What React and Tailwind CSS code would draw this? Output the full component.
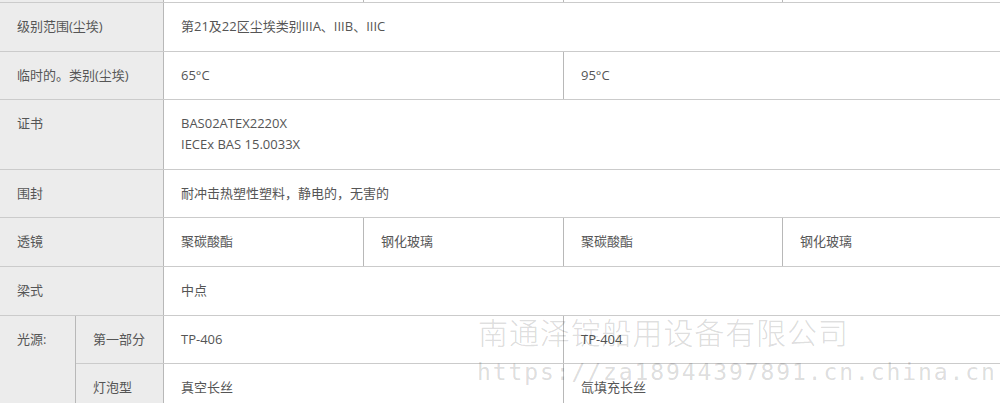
import React from "react";

const font = { fontFamily: '"Open Sans", "Noto Sans CJK SC", sans-serif' };

const Label = ({ children, w = "w-[164px]" }) => (
  <div className={`${w} shrink-0 bg-[#ececec] border-r border-[#b8b8b8] pl-[17px] pt-[13px] leading-[21px]`}>
    {children}
  </div>
);

const Cell = ({ children, w = "flex-1", last }) => (
  <div className={`${w} ${last ? "" : "border-r border-[#b8b8b8]"} pl-[17px] pt-[13px] leading-[21px]`}>
    {children}
  </div>
);

const Row = ({ h, children }) => (
  <div className={`${h} flex border-b border-[#cbcbcb]`}>{children}</div>
);

export default function App() {
  return (
    <div
      className="relative w-[1000px] h-[403px] overflow-hidden bg-white text-[13px] text-[#555]"
      style={font}
    >
      {/* tail of the previous row */}
      <div className="h-[3px] flex border-b border-[#cbcbcb]">
        <div className="w-[164px] bg-[#ececec] border-r border-[#b8b8b8]" />
        <div className="w-[200px] border-r border-[#b8b8b8]" />
        <div className="w-[200px] border-r border-[#b8b8b8]" />
        <div className="w-[219px] border-r border-[#b8b8b8]" />
        <div className="flex-1" />
      </div>

      <Row h="h-[49px]">
        <Label>级别范围(尘埃)</Label>
        <Cell last>第21及22区尘埃类别IIIA、IIIB、IIIC</Cell>
      </Row>

      <Row h="h-[48px]">
        <Label>临时的。类别(尘埃)</Label>
        <Cell w="w-[400px]">65°C</Cell>
        <Cell last>95°C</Cell>
      </Row>

      <Row h="h-[70px]">
        <Label>证书</Label>
        <Cell last>
          <div>BAS02ATEX2220X</div>
          <div>IECEx BAS 15.0033X</div>
        </Cell>
      </Row>

      <Row h="h-[48px]">
        <Label>围封</Label>
        <Cell last>耐冲击热塑性塑料，静电的，无害的</Cell>
      </Row>

      <Row h="h-[49px]">
        <Label>透镜</Label>
        <Cell w="w-[200px]">聚碳酸酯</Cell>
        <Cell w="w-[200px]">钢化玻璃</Cell>
        <Cell w="w-[219px]">聚碳酸酯</Cell>
        <Cell last>钢化玻璃</Cell>
      </Row>

      <Row h="h-[49px]">
        <Label>梁式</Label>
        <Cell last>中点</Cell>
      </Row>

      <div className="flex">
        <Label w="w-[76px]">光源:</Label>
        <div className="flex-1 flex flex-col">
          <Row h="h-[48px]">
            <Label w="w-[88px]">第一部分</Label>
            <Cell w="w-[400px]">TP-406</Cell>
            <Cell last>TP-404</Cell>
          </Row>
          <Row h="h-[49px]">
            <Label w="w-[88px]">灯泡型</Label>
            <Cell w="w-[400px]">真空长丝</Cell>
            <Cell last>氙填充长丝</Cell>
          </Row>
        </div>
      </div>

      {/* watermark */}
      <div
        className="absolute left-[478px] top-[316px] whitespace-nowrap text-[30px] leading-[30px] tracking-[0.9px] font-light text-[rgba(0,0,0,0.15)] pointer-events-none"
        style={{ fontFamily: '"Noto Sans CJK SC", sans-serif' }}
      >
        南通泽锭船用设备有限公司
      </div>
      <div
        className="absolute left-[477px] top-[361px] whitespace-nowrap text-[23px] leading-[23px] tracking-[1.9px] text-[rgba(0,0,0,0.15)] pointer-events-none"
        style={{ fontFamily: '"DejaVu Sans Mono", monospace' }}
      >
        https://za18944397891.cn.china.cn
      </div>
    </div>
  );
}
